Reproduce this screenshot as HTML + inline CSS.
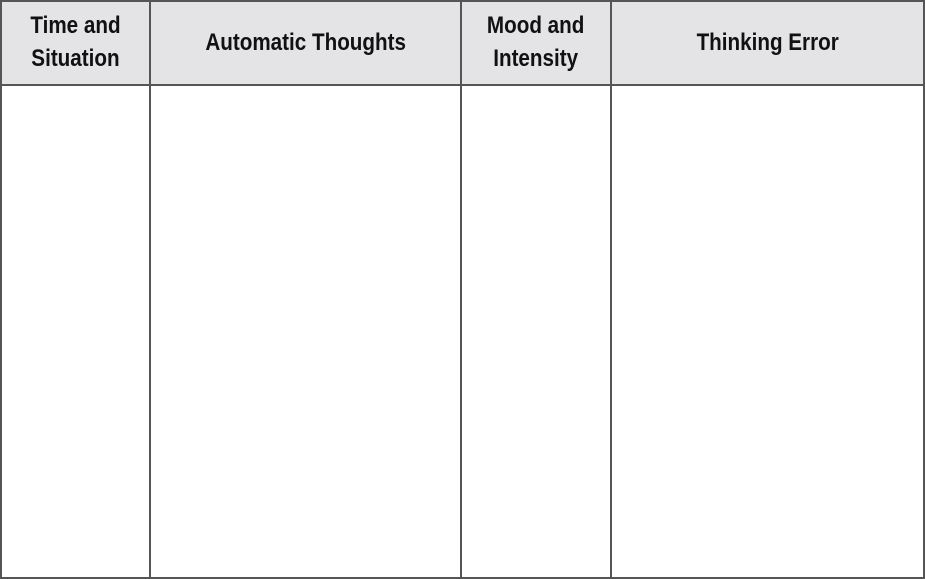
<!DOCTYPE html>
<html><head><style>
html,body{margin:0;padding:0;background:#fff;}
.wrap{position:relative;width:925px;height:579px;overflow:hidden;}
.hdr{position:absolute;left:0;top:0;width:925px;height:84px;background:#e4e4e6;}
.v{position:absolute;top:0;width:2px;height:579px;background:#555;}
.h{position:absolute;left:0;width:925px;height:2px;background:#555;}
.t{position:absolute;top:0;height:84px;display:flex;align-items:center;justify-content:center;text-align:center;
font-family:"Liberation Sans",sans-serif;font-weight:bold;font-size:24px;line-height:33px;color:#111;}
.t span{display:inline-block;transform:scaleX(0.86);white-space:nowrap;}
</style></head><body><div class="wrap">
<div class="hdr"></div>
<div class="h" style="top:0"></div>
<div class="h" style="top:84px"></div>
<div class="h" style="top:577px"></div>
<div class="v" style="left:0"></div>
<div class="v" style="left:149px"></div>
<div class="v" style="left:460px"></div>
<div class="v" style="left:610px"></div>
<div class="v" style="left:923px"></div>
<div class="t" style="left:0;width:151px;"><span>Time and<br>Situation</span></div>
<div class="t" style="left:151px;width:310px;"><span>Automatic Thoughts</span></div>
<div class="t" style="left:461px;width:150px;"><span>Mood and<br>Intensity</span></div>
<div class="t" style="left:611px;width:313px;"><span>Thinking Error</span></div>
</div></body></html>
